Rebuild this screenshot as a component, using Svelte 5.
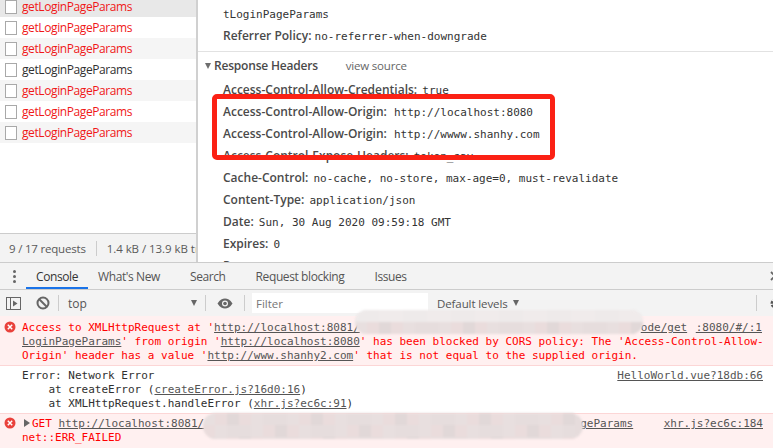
<script lang="ts">
  const rows = [
    { failed: true },
    { failed: true },
    { failed: true },
    { failed: false },
    { failed: true },
    { failed: true },
    { failed: true },
  ];

  const tabs = ["Console", "What's New", "Search", "Request blocking", "Issues"];

  const lowerHeaders = [
    ["Cache-Control:", "no-cache, no-store, max-age=0, must-revalidate"],
    ["Content-Type:", "application/json"],
    ["Date:", "Sun, 30 Aug 2020 09:59:18 GMT"],
    ["Expires:", "0"],
    ["P", ""],
  ];

  // blurred-out part of the urls, drawn as a coarse mosaic
  const tones = ["#e8dfdf", "#e4d9d9", "#ecdede", "#e1d8d8", "#eadcdc", "#e6dddd", "#efdcdc"];
  const lightTones = ["#eeeaea", "#ecebeb", "#f0ebeb", "#ebe9e9"];

  function cells(count: number, palette = tones) {
    return Array.from({ length: count }, (_, i) => palette[(i * i + 3 * i) % palette.length]);
  }

  const firstSmudge = [...cells(24, lightTones), ...cells(24)];
</script>

<div class="devtools">
  <div class="network">
    <div class="left">
      <div class="list">
        {#each rows as row, i}
          <div class="row" class:odd={i % 2 === 0} class:selected={i === 0} class:failed={row.failed}>
            <span class="file"></span>
            <span>getLoginPageParams</span>
          </div>
        {/each}
      </div>
      <div class="summary">
        <span class="count">9 / 17 requests</span>
        <span class="size">1.4 kB / 13.9 kB transferred</span>
      </div>
    </div>

    <div class="details">
      <div class="line first"><span class="value">tLoginPageParams</span></div>
      <div class="line referrer"><b>Referrer Policy:</b> <span class="value">no-referrer-when-downgrade</span></div>
      <div class="section">
        <span class="arrow"></span>
        <b>Response Headers</b>
        <span class="source">view source</span>
      </div>
      <div class="line"><b>Access-Control-Allow-Credentials:</b> <span class="value">true</span></div>
      <div class="line allow"><b>Access-Control-Allow-Origin:</b> <span class="value">http://localhost:8080</span></div>
      <div class="line allow"><b>Access-Control-Allow-Origin:</b> <span class="value">http://wwww.shanhy.com</span></div>
      <div class="line"><b>Access-Control-Expose-Headers:</b> <span class="value">token_sav</span></div>
      {#each lowerHeaders as [name, value]}
        <div class="line"><b>{name}</b> <span class="value">{value}</span></div>
      {/each}
      <div class="highlight"></div>
    </div>
  </div>

  <div class="tabbar">
    <span class="dots"><i></i><i></i><i></i></span>
    {#each tabs as tab, i}
      <span class="tab" class:active={i === 0}>{tab}</span>
    {/each}
    <svg class="close" width="10" height="10" viewBox="0 0 10 10"><path d="M1 1l8 8M9 1l-8 8" stroke="#666" stroke-width="1.8" /></svg>
  </div>

  <div class="toolbar">
    <svg class="sidebar" width="15" height="13" viewBox="0 0 15 13">
      <rect x="0.5" y="0.5" width="14" height="12" fill="none" stroke="#666" />
      <path d="M4.500 1v11" stroke="#666" />
      <path d="M7 3.500l4.500 3-4.500 3z" fill="#666" />
    </svg>
    <svg class="clear" width="14" height="14" viewBox="0 0 14 14">
      <circle cx="7" cy="7" r="5.500" fill="none" stroke="#666" stroke-width="2" />
      <path d="M3 3l8 8" stroke="#666" stroke-width="2" />
    </svg>
    <span class="sep"></span>
    <span class="context">top</span>
    <span class="caret"></span>
    <span class="sep"></span>
    <svg class="eye" width="16" height="11" viewBox="0 0 16 11">
      <path d="M0.500 5.500C3 1.500 5.500 0.500 8 0.500s5 1 7.500 5c-2.500 4-5 5-7.500 5s-5-1-7.500-5z" fill="#666" />
      <circle cx="8" cy="5.500" r="3" fill="#f3f3f3" />
      <circle cx="8" cy="5.500" r="1.800" fill="#666" />
    </svg>
    <span class="sep"></span>
    <span class="filter">Filter</span>
    <span class="levels">Default levels</span>
    <span class="caret small"></span>
    <span class="spacer"></span>
    <span class="sep"></span>
    <svg class="gear" width="13" height="13" viewBox="0 0 13 13">
      <circle cx="6.500" cy="6.500" r="3.500" fill="none" stroke="#555" stroke-width="3" stroke-dasharray="2.500 1" />
    </svg>
  </div>

  <div class="console">
    <div class="msg error">
      <span class="x"><svg width="12" height="12" viewBox="0 0 12 12"><circle cx="6" cy="6" r="5.500" fill="#e9413b" /><path d="M3.800 3.800l4.400 4.400M8.200 3.800l-4.400 4.400" stroke="#fff" stroke-width="1.500" /></svg></span>
      <div class="text">
        <div class="pre">Access to XMLHttpRequest at '<a>http://localhost:8081/</a><span class="gap-a"></span><a>ode/get</a> <a class="port">:8080/#/:1</a></div>
        <div class="pre"><a>LoginPageParams</a>' from origin '<a>http://localhost:8080</a>' has been blocked by CORS policy: The 'Access-Control-Allow-</div>
        <div class="pre">Origin' header has a value '<a>http://www.shanhy2.com</a>' that is not equal to the supplied origin.</div>
      </div>
    </div>

    <div class="msg plain">
      <div class="text">
        <div class="pre">Error: Network Error</div>
        <div class="pre indent">at createError (<a>createError.js?16d0:16</a>)</div>
        <div class="pre indent">at XMLHttpRequest.handleError (<a>xhr.js?ec6c:91</a>)</div>
      </div>
      <a class="origin">HelloWorld.vue?18db:66</a>
    </div>

    <div class="msg error last">
      <span class="x"><svg width="12" height="12" viewBox="0 0 12 12"><circle cx="6" cy="6" r="5.500" fill="#e9413b" /><path d="M3.800 3.800l4.400 4.400M8.200 3.800l-4.400 4.400" stroke="#fff" stroke-width="1.500" /></svg></span>
      <div class="text">
        <div class="pre"><span class="expand"></span>GET <a>http://localhost:8081/</a><span class="gap-b"></span><a>geParams</a></div>
        <div class="pre">net::ERR_FAILED</div>
      </div>
      <a class="origin">xhr.js?ec6c:184</a>
    </div>
  </div>

  <div class="smudge one">
    {#each firstSmudge as tone}
      <i style:background={tone}></i>
    {/each}
  </div>
  <div class="smudge two">
    {#each cells(96) as tone}
      <i style:background={tone}></i>
    {/each}
  </div>
</div>

<style>
  :global(body) {
    background: #fff;
  }

  .devtools {
    width: 773px;
    height: 448px;
    position: relative;
    overflow: hidden;
    display: flex;
    flex-direction: column;
    font-family: "Open Sans", "Noto Sans", sans-serif;
    font-size: 12px;
    color: #333;
    background: #fff;
  }

  .network {
    height: 262px;
    flex-shrink: 0;
    display: flex;
    overflow: hidden;
  }

  .left {
    width: 196px;
    flex-shrink: 0;
    display: flex;
    flex-direction: column;
    border-right: 2px solid #d0d0d0;
    overflow: hidden;
  }

  .list {
    flex: 1;
    margin-top: -4px;
  }

  .row {
    height: 21px;
    display: flex;
    align-items: center;
    gap: 5px;
    padding-left: 5px;
    white-space: nowrap;
    font-size: 12px;
    letter-spacing: -0.4px;
    color: #303030;
  }

  .row.odd {
    background: #f5f5f5;
  }

  .row.selected {
    background: #e8e8e8;
  }

  .row.failed {
    color: #f01818;
  }

  .file {
    width: 12px;
    height: 14px;
    box-sizing: border-box;
    flex-shrink: 0;
    background: #fff;
    border: 1px solid #a9a9a9;
  }

  .summary {
    height: 28px;
    flex-shrink: 0;
    display: flex;
    align-items: center;
    border-top: 1px solid #ccc;
    background: #f3f3f3;
    color: #5a5a5a;
    font-size: 11.500px;
    letter-spacing: -0.2px;
    white-space: nowrap;
    overflow: hidden;
  }

  .count {
    padding: 0 10px 0 9px;
    border-right: 1px solid #ccc;
  }

  .size {
    padding-left: 10px;
    letter-spacing: -0.05px;
  }

  .details {
    flex: 1;
    position: relative;
    overflow: hidden;
    padding-top: 3px;
  }

  .line {
    height: 22px;
    line-height: 22px;
    padding-left: 25px;
    white-space: nowrap;
    font-size: 12px;
    color: #444;
  }

  .line b,
  .section b {
    font-weight: 600;
    color: #4a4a4a;
  }

  .value {
    font-family: "DejaVu Sans Mono", "Liberation Mono", monospace;
    font-size: 11px;
    color: #333;
    margin-left: 2px;
  }

  .line.first .value,
  .line.referrer .value {
    margin-left: 0;
  }

  .line.allow .value {
    margin-left: 4px;
  }

  .section {
    height: 28px;
    margin-top: 4px;
    border-top: 1px solid #e2e2e2;
    display: flex;
    align-items: center;
    padding-left: 7px;
    box-sizing: border-box;
    font-size: 12px;
    letter-spacing: -0.2px;
  }

  .arrow {
    width: 0;
    height: 0;
    margin-right: 3px;
    border-left: 3.500px solid transparent;
    border-right: 3.500px solid transparent;
    border-top: 6px solid #6e6e6e;
  }

  .source {
    margin-left: 28px;
    color: #666;
    font-size: 11.500px;
  }

  .highlight {
    position: absolute;
    left: 14px;
    top: 94px;
    width: 333px;
    height: 56px;
    border: 5px solid #fb2114;
    border-radius: 5px;
    pointer-events: none;
  }

  .tabbar {
    height: 28px;
    box-sizing: border-box;
    flex-shrink: 0;
    display: flex;
    align-items: stretch;
    background: #f3f3f3;
    border-top: 1px solid #ccc;
    border-bottom: 1px solid #ccc;
    position: relative;
    color: #555;
    font-size: 12px;
  }

  .dots {
    width: 26px;
    box-sizing: border-box;
    display: flex;
    flex-direction: column;
    align-items: center;
    justify-content: center;
    gap: 2px;
    padding-left: 2px;
  }

  .dots i {
    width: 3px;
    height: 3px;
    border-radius: 50%;
    background: #666;
  }

  .tab {
    display: flex;
    align-items: center;
    padding: 0 10px;
    letter-spacing: -0.4px;
    white-space: nowrap;
    margin-right: 10px;
  }

  .tab.active {
    color: #333;
    box-shadow: inset 0 -2px #1a73e8;
    margin-right: 0;
  }

  .close {
    position: absolute;
    right: -7px;
    top: 8px;
  }

  .toolbar {
    height: 26px;
    flex-shrink: 0;
    display: flex;
    align-items: center;
    background: #f3f3f3;
    color: #555;
  }

  .sidebar {
    margin-left: 6px;
  }

  .clear {
    margin-left: 15px;
  }

  .sep {
    width: 1px;
    height: 16px;
    margin: 0 8px;
    background: #ccc;
  }

  .context {
    width: 123px;
    margin-left: 1px;
    padding-top: 1px;
    font-size: 12px;
  }

  .caret {
    width: 0;
    height: 0;
    border-left: 3.500px solid transparent;
    border-right: 3.500px solid transparent;
    border-top: 6px solid #666;
  }

  .eye {
    margin: 0 3px;
  }

  .filter {
    width: 176px;
    height: 20px;
    line-height: 21px;
    box-sizing: border-box;
    padding-left: 4px;
    background: #fff;
    color: #777;
    font-size: 11.500px;
    margin-left: -1px;
  }

  .levels {
    margin-left: 9px;
    margin-right: 5px;
    padding-top: 1px;
    font-size: 11.500px;
    letter-spacing: -0.1px;
  }

  .spacer {
    flex: 1;
  }

  .gear {
    margin: 0 -9px 0 4px;
  }

  .console {
    flex: 1;
    overflow: hidden;
  }

  .msg {
    display: flex;
    padding: 5px 10px 2px 22px;
    position: relative;
    font-family: "DejaVu Sans Mono", "Liberation Mono", monospace;
    font-size: 11px;
    line-height: 14px;
  }

  .msg.error {
    background: #fff0f0;
    color: #f00;
    border-bottom: 1px solid #fcd6d6;
  }

  .msg.plain {
    color: #303030;
    border-bottom: 1px solid #fcd6d6;
    padding-top: 3px;
  }

  .msg.last {
    padding-top: 3px;
    padding-bottom: 3px;
  }

  .text {
    flex: 1;
    min-width: 0;
  }

  .pre {
    white-space: pre;
  }

  .indent {
    padding-left: 26.500px;
  }

  a {
    text-decoration: underline;
    color: #555;
  }

  .x {
    position: absolute;
    left: 4px;
    top: 5px;
    line-height: 0;
  }

  .msg.last .x {
    top: 3px;
  }

  .gap-a {
    display: inline-block;
    width: 281px;
  }

  .port {
    margin-left: 2px;
  }

  .gap-b {
    display: inline-block;
    width: 376px;
  }

  .expand {
    display: inline-block;
    width: 0;
    height: 0;
    margin-left: 2px;
    margin-right: 2px;
    border-top: 4px solid transparent;
    border-bottom: 4px solid transparent;
    border-left: 6px solid #666;
  }

  .origin {
    flex-shrink: 0;
  }

  .smudge {
    position: absolute;
    display: grid;
    grid-auto-rows: 12px;
    grid-template-columns: repeat(auto-fill, 12px);
    overflow: hidden;
    background: #e6dcdc;
    filter: blur(1px);
  }

  .smudge.one {
    left: 355px;
    top: 310px;
    width: 288px;
    height: 24px;
    border-radius: 12px;
  }

  .smudge.two {
    left: 203px;
    top: 413px;
    width: 380px;
    height: 26px;
    border-radius: 13px;
  }
</style>
